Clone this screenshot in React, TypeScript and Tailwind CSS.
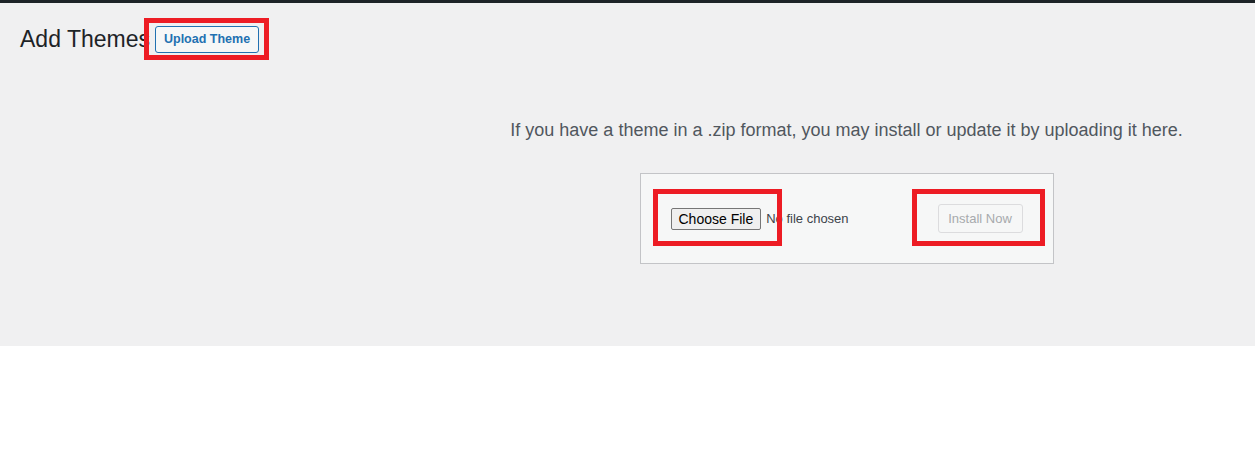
import React from 'react';

const RedMark: React.FC<{ className: string }> = ({ className }) => (
  <div className={`pointer-events-none absolute border-[5px] border-[#ed1c24] ${className}`} />
);

export default function App() {
  return (
    <div className="w-[1255px] h-[464px] bg-white font-['Segoe_UI','Liberation_Sans',sans-serif] text-[#3c434a]">
      <div className="h-[3px] bg-[#1d2327]" />
      <div className="h-[343px] bg-[#f0f0f1]">
        {/* header */}
        <div className="flex items-center pl-[20px] pt-[22px]">
          <h1 className="text-[23px] leading-[29px] font-normal text-[#1d2327] m-0">Add Themes</h1>
          <div className="relative ml-[5px]">
            <button className="h-[27px] px-[8px] border border-[#2271b1] rounded-[3px] bg-[#f6f7f7] text-[#2271b1] text-[12.5px] font-semibold leading-none">
              Upload Theme
            </button>
            <RedMark className="-left-[11px] -top-[8px] w-[125px] h-[42px]" />
          </div>
        </div>

        {/* upload area */}
        <div className="flex flex-col items-center pl-[438px]">
          <p className="mt-[63px] text-[18px] leading-[26px] text-[#50575e]">
            If you have a theme in a .zip format, you may install or update it by uploading it here.
          </p>
          <div className="mt-[30px] w-[414px] h-[91px] border border-[#c3c4c7] bg-[#f6f7f7] flex items-center justify-between pl-[30px] pr-[30px]">
            <div className="relative flex items-center">
              <span className="h-[22px] px-[7px] border border-[#767676] rounded-[2px] bg-[#efefef] text-[14px] leading-[20px] text-black font-['Liberation_Sans',sans-serif]">
                Choose File
              </span>
              <span className="ml-[5px] text-[13px] text-[#3c434a]">No file chosen</span>
              <RedMark className="-left-[18px] -top-[19px] w-[129px] h-[57px]" />
            </div>
            <div className="relative">
              <button
                disabled
                className="h-[29px] w-[85px] border border-[#dcdcde] rounded-[3px] bg-[#f6f7f7] text-[#a7aaad] text-[13px] leading-none"
              >
                Install Now
              </button>
              <RedMark className="-left-[26px] -top-[15px] w-[133px] h-[57px]" />
            </div>
          </div>
        </div>
      </div>
    </div>
  );
}
